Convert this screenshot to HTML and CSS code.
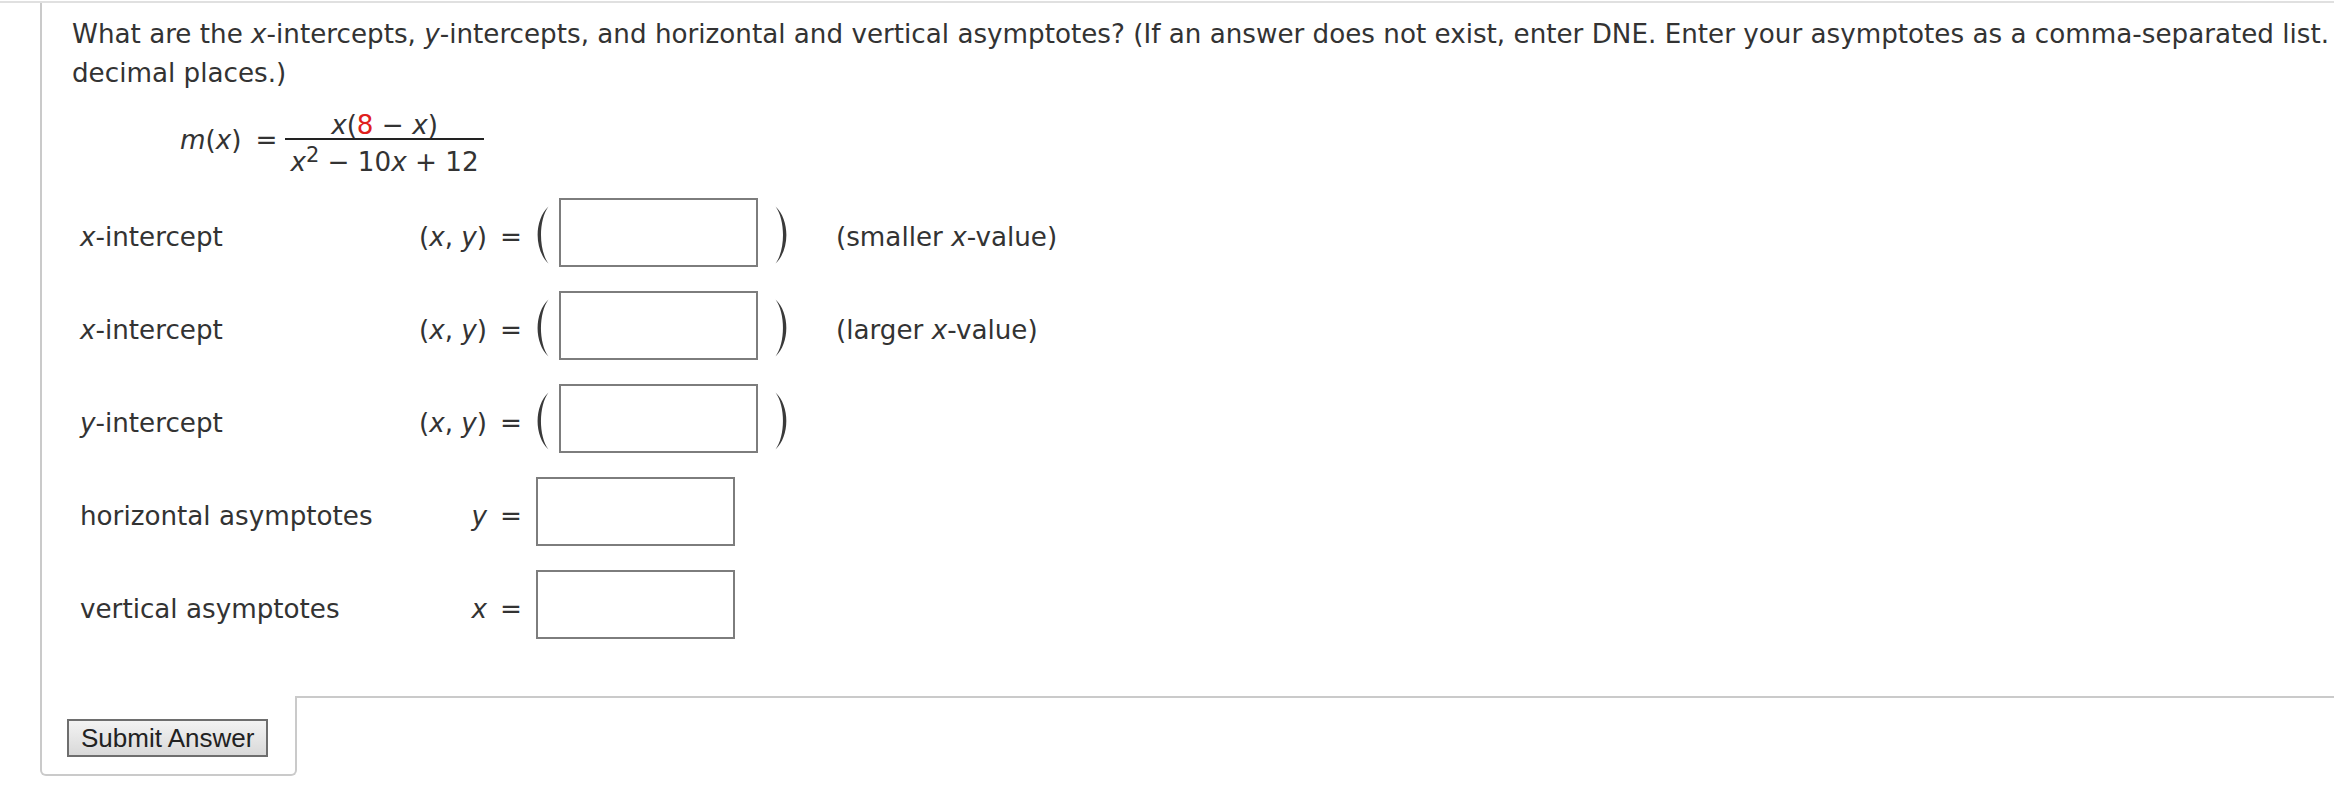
FILE: index.html
```html
<!DOCTYPE html>
<html lang="en">
<head>
<meta charset="utf-8">
<title>Intercepts and asymptotes</title>
<link rel="stylesheet" href="styles.css">
</head>
<body>
<div class="topline"></div>
<div class="panel">
  <p class="prompt">What are the <i>x</i>-intercepts, <i>y</i>-intercepts, and horizontal and vertical asymptotes? (If an answer does not exist, enter DNE. Enter your asymptotes as a comma-separated list.<br>decimal places.)</p>
  <div class="formula">
    <span class="lhs"><i>m</i>(<i>x</i>)</span><span class="eq">=</span>
    <span class="frac">
      <span class="num"><i>x</i>(<span class="red">8</span> − <i>x</i>)</span>
      <span class="den"><i>x</i><sup>2</sup> − 10<i>x</i> + 12</span>
    </span>
  </div>
  <div class="answers">
    <div class="label"><i>x</i>-intercept</div>
    <div class="math">(<i>x</i>, <i>y</i>)<span class="meq">=</span></div>
    <div class="ans">
      <svg class="paren" viewBox="0 0 16 58" width="16" height="58"><path d="M14.5 0.5 C0 14 0 44 14.5 57.5 C4.5 44 4.5 14 14.5 0.5 Z"/></svg>
      <input class="box" type="text" aria-label="smaller x-intercept">
      <svg class="paren close" viewBox="0 0 16 58" width="16" height="58"><path d="M1.5 0.5 C16 14 16 44 1.5 57.5 C11.5 44 11.5 14 1.5 0.5 Z"/></svg>
    </div>
    <div class="hint">(smaller <i>x</i>-value)</div>

    <div class="label"><i>x</i>-intercept</div>
    <div class="math">(<i>x</i>, <i>y</i>)<span class="meq">=</span></div>
    <div class="ans">
      <svg class="paren" viewBox="0 0 16 58" width="16" height="58"><path d="M14.5 0.5 C0 14 0 44 14.5 57.5 C4.5 44 4.5 14 14.5 0.5 Z"/></svg>
      <input class="box" type="text" aria-label="larger x-intercept">
      <svg class="paren close" viewBox="0 0 16 58" width="16" height="58"><path d="M1.5 0.5 C16 14 16 44 1.5 57.5 C11.5 44 11.5 14 1.5 0.5 Z"/></svg>
    </div>
    <div class="hint">(larger <i>x</i>-value)</div>

    <div class="label"><i>y</i>-intercept</div>
    <div class="math">(<i>x</i>, <i>y</i>)<span class="meq">=</span></div>
    <div class="ans">
      <svg class="paren" viewBox="0 0 16 58" width="16" height="58"><path d="M14.5 0.5 C0 14 0 44 14.5 57.5 C4.5 44 4.5 14 14.5 0.5 Z"/></svg>
      <input class="box" type="text" aria-label="y-intercept">
      <svg class="paren close" viewBox="0 0 16 58" width="16" height="58"><path d="M1.5 0.5 C16 14 16 44 1.5 57.5 C11.5 44 11.5 14 1.5 0.5 Z"/></svg>
    </div>
    <div class="hint"></div>

    <div class="label">horizontal asymptotes</div>
    <div class="math"><i>y</i><span class="meq">=</span></div>
    <div class="ans">
      <input class="box plain" type="text" aria-label="horizontal asymptotes">
    </div>
    <div class="hint"></div>

    <div class="label">vertical asymptotes</div>
    <div class="math"><i>x</i><span class="meq">=</span></div>
    <div class="ans">
      <input class="box plain" type="text" aria-label="vertical asymptotes">
    </div>
    <div class="hint"></div>
  </div>
</div>
<div class="footer">
  <div class="tab"><button class="submit" type="button">Submit Answer</button></div>
  <div class="rest"></div>
</div>
</body>
</html>
```

FILE: styles.css
```css
html, body {
  margin: 0;
  padding: 0;
  background: #ffffff;
  overflow: hidden;
}

body {
  width: 2334px;
  height: 806px;
  font-family: "DejaVu Sans", Verdana, sans-serif;
  font-size: 26.2px;
  color: #333333;
}

i {
  font-style: italic;
}

.topline {
  height: 2px;
  margin-top: 1px;
  background: #e0e0e0;
}

.panel {
  margin-left: 40px;
  border-left: 2px solid #cacaca;
  padding: 12px 0 45px 30px;
}

.prompt {
  margin: 0;
  line-height: 39px;
  white-space: nowrap;
}

.formula {
  display: flex;
  align-items: center;
  margin: 7px 0 10px 108px;
}

.lhs,
.eq {
  line-height: 28px;
  padding-top: 4px;
}

.eq {
  margin-left: 14px;
}

.frac {
  display: flex;
  flex-direction: column;
  margin-left: 8px;
}

.num {
  line-height: 26px;
  padding-top: 12px;
  text-align: center;
  border-bottom: 2px solid #222222;
}

.den {
  line-height: 28px;
  padding: 8px 5px 0;
  text-align: center;
}

.den sup {
  font-size: 0.8em;
  line-height: 0;
  vertical-align: 0.45em;
}

.red {
  color: #e0201c;
}

.answers {
  display: grid;
  grid-template-columns: 320px 122px max-content max-content;
  grid-auto-rows: 93px;
  align-items: center;
  margin-left: 8px;
}

.label,
.math,
.hint {
  white-space: nowrap;
  padding-top: 8px;
}

.math {
  text-align: right;
}

.meq {
  margin-left: 13px;
}

.ans {
  display: flex;
  align-items: center;
  padding-left: 12px;
}

.paren {
  display: block;
  fill: #3a3a3a;
  margin-top: 5px;
}

.box {
  display: block;
  box-sizing: border-box;
  width: 199px;
  height: 69px;
  margin: 0 16px 0 9px;
  padding: 0;
  border: 2px solid #7d7d7d;
  border-radius: 0;
  background: #ffffff;
  outline: none;
}

.box.plain {
  margin: 0 0 0 2px;
}

.hint {
  padding-left: 46px;
}

.footer {
  display: flex;
  margin-left: 40px;
}

.tab {
  border: 2px solid #cacaca;
  border-top: none;
  border-radius: 0 0 6px 6px;
  padding: 23px 27px 17px 25px;
}

.submit {
  display: block;
  box-sizing: border-box;
  width: 201px;
  height: 38px;
  margin: 0;
  padding: 0 12px;
  border: 2px solid #6e6e6e;
  border-radius: 0;
  background: linear-gradient(#f3f3f3, #d9d9d9);
  font-family: "Liberation Sans", Arial, sans-serif;
  font-size: 26px;
  color: #222222;
  text-align: left;
  white-space: nowrap;
}

.rest {
  flex: 1;
  border-top: 2px solid #cacaca;
}
```
